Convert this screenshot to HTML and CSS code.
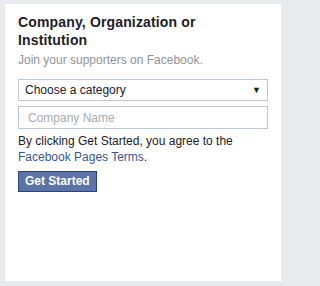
FILE: index.html
```html
<!DOCTYPE html>
<html>
<head>
<meta charset="utf-8">
<link rel="stylesheet" href="styles.css">
</head>
<body>
<div class="panel">
  <h2 class="title">Company, Organization or Institution</h2>
  <p class="sub">Join your supporters on Facebook.</p>
  <div class="select">
    <span class="select-text">Choose a category</span>
    <span class="arrow">&#9660;</span>
  </div>
  <input class="input" type="text" placeholder="Company Name">
  <p class="terms">By clicking Get Started, you agree to the <a href="#" class="link">Facebook Pages Terms</a>.</p>
  <button class="btn">Get Started</button>
</div>
</body>
</html>
```
FILE: styles.css
```css
html, body {
  margin: 0;
  padding: 0;
  background: #e9eaed;
}
body {
  padding: 4px 5px 5px 5px;
  font-family: "Liberation Sans", Arial, sans-serif;
}
.panel {
  box-sizing: border-box;
  width: 276px;
  height: 277px;
  background: #ffffff;
  padding: 9px 13px 0 13px;
  display: flex;
  flex-direction: column;
  align-items: flex-start;
}
.title {
  margin: 0;
  font-size: 14px;
  line-height: 18px;
  font-weight: bold;
  letter-spacing: 0.15px;
  color: #1d2129;
  max-width: 236px;
}
.sub {
  margin: 3px 0 0 0;
  font-size: 12px;
  line-height: 16px;
  color: #90949c;
}
.select {
  box-sizing: border-box;
  margin-top: 11px;
  width: 250px;
  height: 22px;
  border: 1px solid #bdc7d8;
  display: flex;
  align-items: center;
  justify-content: space-between;
  padding: 0 6px 0 6px;
  font-size: 12px;
  color: #1d2129;
}
.arrow {
  font-size: 9px;
  color: #1d2129;
}
.input {
  box-sizing: border-box;
  margin: 5px 0 0 0;
  width: 250px;
  height: 23px;
  border: 1px solid #bdc7d8;
  padding: 0 9px;
  font-family: "Liberation Sans", Arial, sans-serif;
  font-size: 12px;
  color: #1d2129;
  outline: none;
}
.input::placeholder {
  color: #a7abb2;
}
.terms {
  margin: 4px 0 0 0;
  font-size: 12px;
  line-height: 16px;
  color: #1d2129;
}
.link {
  color: #365899;
  text-decoration: none;
}
.btn {
  box-sizing: border-box;
  margin-top: 6px;
  height: 21px;
  padding: 0 6px;
  background: #5b74a8;
  border: 1px solid #29447e;
  color: #ffffff;
  font-family: "Liberation Sans", Arial, sans-serif;
  font-size: 12px;
  font-weight: bold;
  line-height: 19px;
}
```
